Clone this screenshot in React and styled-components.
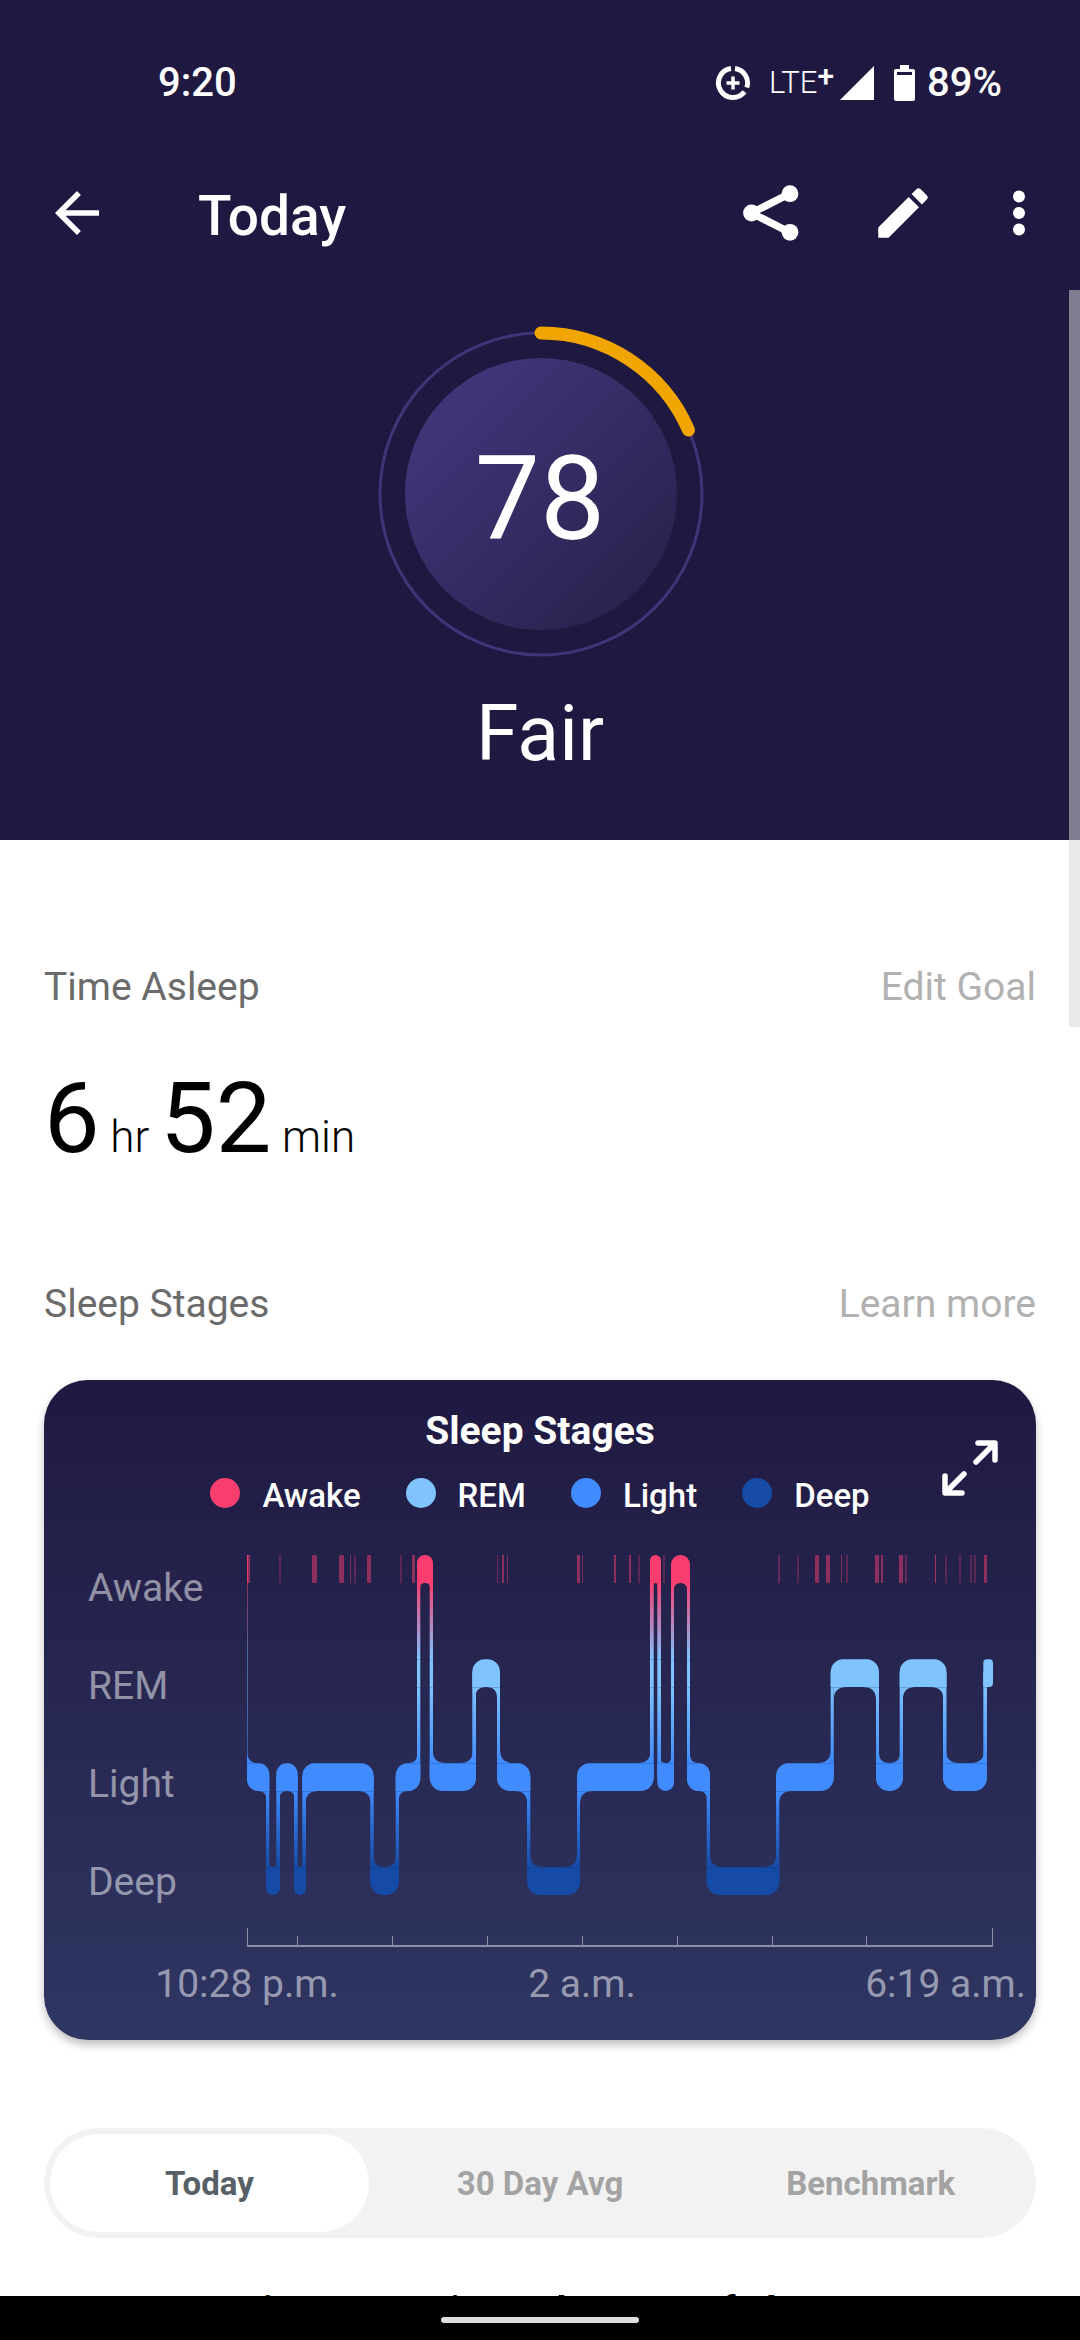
import React, { useState } from "react";
import styled, { createGlobalStyle } from "styled-components";

const GlobalStyle = createGlobalStyle`
  * { box-sizing: border-box; }
  html, body, #root { height: 100%; }
  body {
    margin: 0;
    background: #ffffff;
    font-family: Roboto, "Noto Sans", sans-serif;
  }
  h1, h2, h3, p, ul { margin: 0; padding: 0; font-weight: 400; }
  button { border: 0; padding: 0; background: none; color: inherit; font: inherit; cursor: pointer; }
  svg { display: block; }
`;

const Screen = styled.div`
  display: flex;
  flex-direction: column;
  height: 100%;
  overflow: hidden;
`;

const TopArea = styled.header`
  background: #1f1941;
  color: #ffffff;
`;

const StatusBar = styled.div`
  display: flex;
  align-items: center;
  justify-content: space-between;
  height: 136px;
  padding: 30px 78px 0 158px;
  font-size: 40px;
  font-weight: 500;
  line-height: 40px;
`;

const StatusIcons = styled.div`
  display: flex;
  align-items: center;
`;

const Network = styled.span`
  display: flex;
  margin: 0 6px 0 18px;
  font-size: 31px;
  font-weight: 300;
`;

const NetworkPlus = styled.sup`
  font-size: 30px;
  font-weight: 500;
  line-height: 26px;
`;

const BatteryLevel = styled.span`
  margin-left: 12px;
`;

const AppBar = styled.div`
  display: flex;
  align-items: center;
  height: 154px;
  padding: 0 44px;
`;

const Title = styled.h1`
  flex: 1;
  padding: 6px 0 0 88px;
  font-size: 55px;
  font-weight: 500;
  line-height: 64px;
`;

const Actions = styled.div`
  display: flex;
  gap: 66px;
`;

const IconButton = styled.button`
  display: grid;
  place-items: center;
  width: ${(p) => (p.$narrow ? "34px" : "66px")};
  height: 66px;
`;

const ScrollArea = styled.main`
  position: relative;
  flex: 1;
  min-height: 0;
  overflow: hidden;
`;

const ScrollThumb = styled.div`
  position: absolute;
  top: 0;
  right: 0;
  width: 11px;
  height: 737px;
  background: rgba(216, 216, 216, 0.53);
`;

const ScoreSection = styled.section`
  display: flex;
  flex-direction: column;
  align-items: center;
  padding: 34px 0 60px;
  background: #1f1941;
  color: #ffffff;
`;

const ScoreDial = styled.div`
  display: grid;
  place-items: center;
  > * { grid-area: 1 / 1; }
`;

const ScoreValue = styled.p`
  padding-top: 12px;
  font-size: 116px;
  line-height: 120px;
`;

const ScoreLabel = styled.h2`
  margin-top: 26px;
  font-size: 77px;
  line-height: 92px;
`;

const Content = styled.div`
  padding: 0 44px;
`;

const SectionHeader = styled.div`
  display: flex;
  justify-content: space-between;
  font-size: 39px;
  line-height: 48px;
`;

const SectionTitle = styled.h2`
  color: #6b6b6b;
  font-size: 39px;
`;

const SectionLink = styled.a`
  color: #b1b1b1;
  text-decoration: none;
`;

const TimeAsleep = styled.section`
  padding-top: 123px;
`;

const Duration = styled.p`
  margin-top: 47px;
  font-size: 99px;
  line-height: 120px;
  color: #000000;
`;

const Unit = styled.span`
  font-size: 44px;
  font-weight: 300;
  line-height: 48px;
`;

const Stages = styled.section`
  padding-top: 102px;
`;

const Card = styled.div`
  margin-top: 52px;
  border-radius: 44px;
  background: linear-gradient(#1f1941, #2f3662);
  box-shadow: 0 5px 8px rgba(0, 0, 0, 0.25);
  color: #ffffff;
`;

const CardHeader = styled.div`
  display: grid;
  grid-template-columns: 1fr auto 1fr;
  height: 140px;
  padding-top: 27px;
`;

const CardHeading = styled.div`
  grid-column: 2;
  display: flex;
  flex-direction: column;
  align-items: center;
  gap: 23px;
`;

const CardTitle = styled.h3`
  font-size: 39px;
  font-weight: 700;
  line-height: 48px;
`;

const Legend = styled.ul`
  display: flex;
  gap: 45px;
  list-style: none;
`;

const LegendItem = styled.li`
  display: flex;
  align-items: flex-start;
  gap: 22px;
  font-size: 33px;
  font-weight: 500;
  line-height: 36px;
`;

const LegendDot = styled.span`
  width: 30px;
  height: 30px;
  border-radius: 50%;
  background: ${(p) => p.$color};
`;

const ExpandButton = styled(IconButton)`
  justify-self: end;
  margin: 28px 33px 0 0;
`;

const ChartSvg = styled.svg`
  width: 100%;
  height: auto;
`;

const ChartLabel = styled.text`
  fill: rgba(255, 255, 255, 0.5);
  font-size: 39px;
`;

const Tabs = styled.div`
  display: flex;
  margin-top: 88px;
  border-radius: 55px;
  background: #f2f2f2;
`;

const Tab = styled.button`
  flex: 1;
  height: 98px;
  margin: 6px;
  padding-top: 2px;
  border-radius: 49px;
  background: ${(p) => (p.$active ? "#ffffff" : "transparent")};
  color: ${(p) => (p.$active ? "#566066" : "#a3a3a3")};
  font-size: 33px;
  font-weight: 700;
  line-height: 40px;
`;

const BreakdownTitle = styled.h3`
  margin-top: 50px;
  color: #000000;
  font-size: 40px;
  font-weight: 700;
  line-height: 48px;
  text-align: center;
`;

const SystemNav = styled.footer`
  display: flex;
  justify-content: center;
  padding: 21px 0 17px;
  background: #000000;
`;

const HomeHandle = styled.div`
  width: 198px;
  height: 6px;
  border-radius: 3px;
  background: #dcdedc;
`;

const STAGES = {
  Awake: { color: "#f73e6f", y: 0 },
  REM: { color: "#7fc3ff", y: 104 },
  Light: { color: "#408cff", y: 208 },
  Deep: { color: "#154ba6", y: 312 },
};

const BAND = 28;
const LINK = 3;

// [stage, start, end]; neighbouring spans overlap by the width of the link between them
const SPANS = [
  ["Light", 0, 22.3],
  ["Deep", 19, 33],
  ["Light", 29.3, 50.7],
  ["Deep", 47, 59],
  ["Light", 55.3, 126.7],
  ["Deep", 123.3, 152],
  ["Light", 148.7, 173.3],
  ["Awake", 170, 186],
  ["Light", 182.7, 229],
  ["REM", 225.3, 253],
  ["Light", 250, 283.3],
  ["Deep", 280, 333],
  ["Light", 330, 406.7],
  ["Awake", 403, 414],
  ["Light", 410.3, 427],
  ["Awake", 424, 443],
  ["Light", 440, 463],
  ["Deep", 459.7, 532.3],
  ["Light", 529, 586.7],
  ["REM", 583.7, 632],
  ["Light", 629, 656],
  ["REM", 652.7, 699.5],
  ["Light", 696, 740],
  ["REM", 736.3, 746],
];

// [x, width, opacity] of brief awakenings
const MARKS = [
  [0, 3, 0.5], [0, 1, 0.8], [32, 2, 0.25], [65, 5, 0.5], [92, 5, 0.5], [103, 1, 0.45],
  [107, 2, 0.25], [120, 4, 0.5], [153, 2, 0.25], [165, 3, 0.5], [250, 1, 0.35],
  [255, 2, 0.5], [260, 1, 0.45], [330, 3, 0.5], [335, 1, 0.4], [367, 2, 0.5],
  [382, 2, 0.5], [391, 2, 0.25], [416, 2, 0.25], [531, 2, 0.3], [550, 2, 0.25],
  [568, 4, 0.5], [579, 4, 0.5], [594, 1, 0.45], [599, 2, 0.25], [628, 4, 0.5],
  [634, 2, 0.5], [652, 4, 0.5], [658, 2, 0.3], [688, 1, 0.6], [698, 2, 0.25],
  [712, 2, 0.25], [723, 2, 0.25], [727, 2, 0.25], [737, 3, 0.5],
];

const HOURS = [50, 145, 240, 335, 430, 525, 619];

function bandPath([stage, x0, x1]) {
  const i = SPANS.findIndex((s) => s[1] === x0);
  const y0 = STAGES[stage].y;
  const y1 = y0 + BAND;
  const prev = SPANS[i - 1];
  const next = SPANS[i + 1];
  const last = !next;
  const r = last ? 4 : Math.min(13, (x1 - x0) / 2);
  const up = (n) => n && STAGES[n[0]].y < y0;
  const down = (n) => n && STAGES[n[0]].y > y0;
  const tl = !prev || up(prev) ? 0 : r;
  const bl = down(prev) ? 0 : r;
  const tr = up(next) ? 0 : r;
  const br = down(next) ? 0 : r;
  return (
    `M${x0 + tl} ${y0}H${x1 - tr}a${tr} ${tr} 0 0 1 ${tr} ${tr}V${y1 - br}` +
    `a${br} ${br} 0 0 1 ${-br} ${br}H${x0 + bl}a${bl} ${bl} 0 0 1 ${-bl} ${-bl}` +
    `V${y0 + tl}a${tl} ${tl} 0 0 1 ${tl} ${-tl}Z`
  );
}

// Curved corner between a band edge and the vertical link beside it
function fillet(x, y, dx, dy, room) {
  const r = Math.min(13, room);
  return `M${x} ${y}v${dy * r}q0 ${-dy * r} ${dx * r} ${-dy * r}Z`;
}

function inner(i) {
  const [stage, x0, x1] = SPANS[i];
  const y = STAGES[stage].y;
  const prev = SPANS[i - 1];
  const next = SPANS[i + 1];
  const left = x0 + LINK;
  const right = x1 - LINK;
  const sameSide = prev && next && STAGES[prev[0]].y < y === STAGES[next[0]].y < y;
  const room = Math.max(0, sameSide ? (right - left) / 2 : (x1 - x0) / 2 - LINK);
  let d = "";
  if (prev) {
    const above = STAGES[prev[0]].y < y;
    d += fillet(left, above ? y : y + BAND, 1, above ? -1 : 1, room);
  }
  if (next) {
    const above = STAGES[next[0]].y < y;
    d += fillet(right, above ? y : y + BAND, -1, above ? -1 : 1, room);
  }
  return d;
}

function linkPath(i) {
  const a = SPANS[i];
  const b = SPANS[i + 1];
  const top = Math.min(STAGES[a[0]].y, STAGES[b[0]].y) + 13;
  const bottom = Math.max(STAGES[a[0]].y, STAGES[b[0]].y) + BAND - 13;
  return `M${b[1]} ${top}H${a[2]}V${bottom}H${b[1]}Z`;
}

const CURVES = SPANS.map((s, i) => bandPath(s) + inner(i));
const LINKS = SPANS.slice(0, -1).map((s, i) => linkPath(i));

function SleepChart() {
  return (
    <ChartSvg viewBox="0 0 992 520" role="img" aria-label="Sleep stages through the night">
      <defs>
        <linearGradient id="stages" gradientUnits="userSpaceOnUse" x1="0" y1="0" x2="0" y2="340">
          <stop offset="0" stopColor={STAGES.Awake.color} />
          <stop offset={28 / 340} stopColor={STAGES.Awake.color} />
          <stop offset={104 / 340} stopColor={STAGES.REM.color} />
          <stop offset={132 / 340} stopColor={STAGES.REM.color} />
          <stop offset={208 / 340} stopColor={STAGES.Light.color} />
          <stop offset={236 / 340} stopColor={STAGES.Light.color} />
          <stop offset={312 / 340} stopColor={STAGES.Deep.color} />
          <stop offset="1" stopColor={STAGES.Deep.color} />
        </linearGradient>
        <clipPath id="curve">
          {CURVES.concat(LINKS).map((d) => <path key={d} d={d} />)}
        </clipPath>
      </defs>
      {Object.keys(STAGES).map((name, i) => (
        <ChartLabel key={name} x="44" y={81 + i * 98}>{name}</ChartLabel>
      ))}
      <g transform="translate(203 35)">
        {MARKS.map(([x, w, o]) => (
          <rect key={`${x}-${w}`} x={x} y="0" width={w} height={BAND} rx={w > 3 ? 1 : 0} fill="#f73e6f" opacity={o} />
        ))}
        <rect x="0" y="28" width="1" height="180" fill="url(#stages)" opacity="0.45" />
        <path d="M0 198q1 10 10 10v1H0Z" fill="#408cff" />
        <g fill="url(#stages)">
          {CURVES.map((d) => <path key={d} d={d} />)}
          {LINKS.map((d) => <path key={d} d={d} />)}
        </g>
        <g clipPath="url(#curve)" fill="#10204a" opacity="0.2">
          {[104, 132, 208, 236, 312].map((y) => (
            <rect key={y} x="0" y={y} width="746" height="1" />
          ))}
        </g>
      </g>
      <g fill="#ffffff" opacity="0.45" transform="translate(203 408)">
        <rect x="0" y="17" width="746" height="2" />
        <rect x="0" y="0" width="1" height="17" />
        <rect x="745" y="0" width="1" height="17" />
        {HOURS.map((x) => <rect key={x} x={x} y="8" width="1" height="9" />)}
      </g>
      <ChartLabel x="203" y="477" textAnchor="middle">10:28 p.m.</ChartLabel>
      <ChartLabel x="538" y="477" textAnchor="middle">2 a.m.</ChartLabel>
      <ChartLabel x="982" y="477" textAnchor="end">6:19 a.m.</ChartLabel>
    </ChartSvg>
  );
}

function Dial() {
  return (
    <svg width="338" height="338" viewBox="0 0 338 338" aria-hidden="true">
      <defs>
        <linearGradient id="dial" x1="0.15" y1="0.15" x2="0.85" y2="0.85">
          <stop offset="0" stopColor="#3f3679" />
          <stop offset="1" stopColor="#29234f" />
        </linearGradient>
      </defs>
      <circle cx="170" cy="170" r="161" fill="none" stroke="#3f3679" strokeWidth="3" />
      <circle cx="170" cy="170" r="136" fill="url(#dial)" />
      <path d="M170 9A161 161 0 0 1 317.500 106" fill="none" stroke="#f1a502" strokeWidth="13" strokeLinecap="round" />
    </svg>
  );
}

const DataSaverIcon = () => (
  <svg width="36" height="36" viewBox="0 0 36 36" fill="none" stroke="#ffffff" aria-hidden="true">
    <path d="M20 3.600A14.500 14.500 0 0 1 31.800 22.500M29.500 26.700A14.500 14.500 0 1 1 16 3.600" strokeWidth="5" />
    <path d="M18 11.500v13M11.500 18h13" strokeWidth="3.500" />
  </svg>
);

const SignalIcon = () => (
  <svg width="34" height="34" viewBox="0 0 34 34" aria-hidden="true">
    <path d="M34 0v34H0z" fill="#ffffff" />
  </svg>
);

const BatteryIcon = () => (
  <svg width="41" height="36" viewBox="-20 0 41 36" aria-hidden="true">
    <path d="M6 0h9v4h4q2 0 2 2v28q0 2-2 2H2q-2 0-2-2V6q0-2 2-2h4zM3 7v3h15V7z" fill="#ffffff" fillRule="evenodd" />
  </svg>
);

const BackIcon = () => (
  <svg width="66" height="66" viewBox="0 0 24 24" fill="#ffffff" aria-hidden="true">
    <path d="M20 11H7.830l5.590-5.590L12 4l-8 8 8 8 1.410-1.410L7.830 13H20v-2z" />
  </svg>
);

const ShareIcon = () => (
  <svg width="66" height="66" viewBox="0 0 66 66" fill="#ffffff" aria-hidden="true">
    <path d="M52 13.500L13.500 33L52 52.500" fill="none" stroke="#ffffff" strokeWidth="7.500" />
    <circle cx="13.500" cy="33" r="8.400" />
    <circle cx="52" cy="13.700" r="8.400" />
    <circle cx="52" cy="52.300" r="8.400" />
  </svg>
);

const EditIcon = () => (
  <svg width="66" height="66" viewBox="0 0 24 24" fill="#ffffff" aria-hidden="true">
    <path d="M3 17.250V21h3.750L17.810 9.940l-3.750-3.750L3 17.250zM20.710 7.040c.39-.39.39-1.020 0-1.410l-2.340-2.340c-.39-.39-1.020-.39-1.410 0l-1.830 1.830 3.750 3.750 1.830-1.830z" />
  </svg>
);

const MoreIcon = () => (
  <svg width="34" height="66" viewBox="16 0 34 66" fill="#ffffff" aria-hidden="true">
    <circle cx="33" cy="16.500" r="6" />
    <circle cx="33" cy="33" r="6" />
    <circle cx="33" cy="49.500" r="6" />
  </svg>
);

const ExpandIcon = () => (
  <svg width="66" height="66" viewBox="0 0 66 66" fill="none" stroke="#ffffff" strokeWidth="5.500" strokeLinecap="round" strokeLinejoin="round" aria-hidden="true">
    <path d="M39 27L57 9M41 8h17v17M27 39L9 57M8 41v17h17" />
  </svg>
);

const TABS = ["Today", "30 Day Avg", "Benchmark"];

export default function App() {
  const [tab, setTab] = useState(TABS[0]);
  return (
    <Screen>
      <GlobalStyle />
      <TopArea>
        <StatusBar>
          <time>9:20</time>
          <StatusIcons>
            <DataSaverIcon />
            <Network>LTE<NetworkPlus>+</NetworkPlus></Network>
            <SignalIcon />
            <BatteryIcon />
            <BatteryLevel>89%</BatteryLevel>
          </StatusIcons>
        </StatusBar>
        <AppBar>
          <IconButton aria-label="Back"><BackIcon /></IconButton>
          <Title>Today</Title>
          <Actions>
            <IconButton aria-label="Share"><ShareIcon /></IconButton>
            <IconButton aria-label="Edit"><EditIcon /></IconButton>
            <IconButton $narrow aria-label="More options"><MoreIcon /></IconButton>
          </Actions>
        </AppBar>
      </TopArea>
      <ScrollArea>
        <ScoreSection>
          <ScoreDial>
            <Dial />
            <ScoreValue>78</ScoreValue>
          </ScoreDial>
          <ScoreLabel>Fair</ScoreLabel>
        </ScoreSection>
        <Content>
          <TimeAsleep>
            <SectionHeader>
              <SectionTitle>Time Asleep</SectionTitle>
              <SectionLink href="#goal">Edit Goal</SectionLink>
            </SectionHeader>
            <Duration>
              6<Unit> hr </Unit>52<Unit> min</Unit>
            </Duration>
          </TimeAsleep>
          <Stages>
            <SectionHeader>
              <SectionTitle>Sleep Stages</SectionTitle>
              <SectionLink href="#stages-info">Learn more</SectionLink>
            </SectionHeader>
            <Card>
              <CardHeader>
                <CardHeading>
                  <CardTitle>Sleep Stages</CardTitle>
                  <Legend>
                    {Object.entries(STAGES).map(([name, stage]) => (
                      <LegendItem key={name}>
                        <LegendDot $color={stage.color} />
                        {name}
                      </LegendItem>
                    ))}
                  </Legend>
                </CardHeading>
                <ExpandButton aria-label="Expand chart"><ExpandIcon /></ExpandButton>
              </CardHeader>
              <SleepChart />
            </Card>
            <Tabs role="tablist">
              {TABS.map((name) => (
                <Tab key={name} role="tab" aria-selected={tab === name} $active={tab === name} onClick={() => setTab(name)}>
                  {name}
                </Tab>
              ))}
            </Tabs>
            <BreakdownTitle>Time spent in each stage of sleep</BreakdownTitle>
          </Stages>
        </Content>
        <ScrollThumb />
      </ScrollArea>
      <SystemNav>
        <HomeHandle />
      </SystemNav>
    </Screen>
  );
}
